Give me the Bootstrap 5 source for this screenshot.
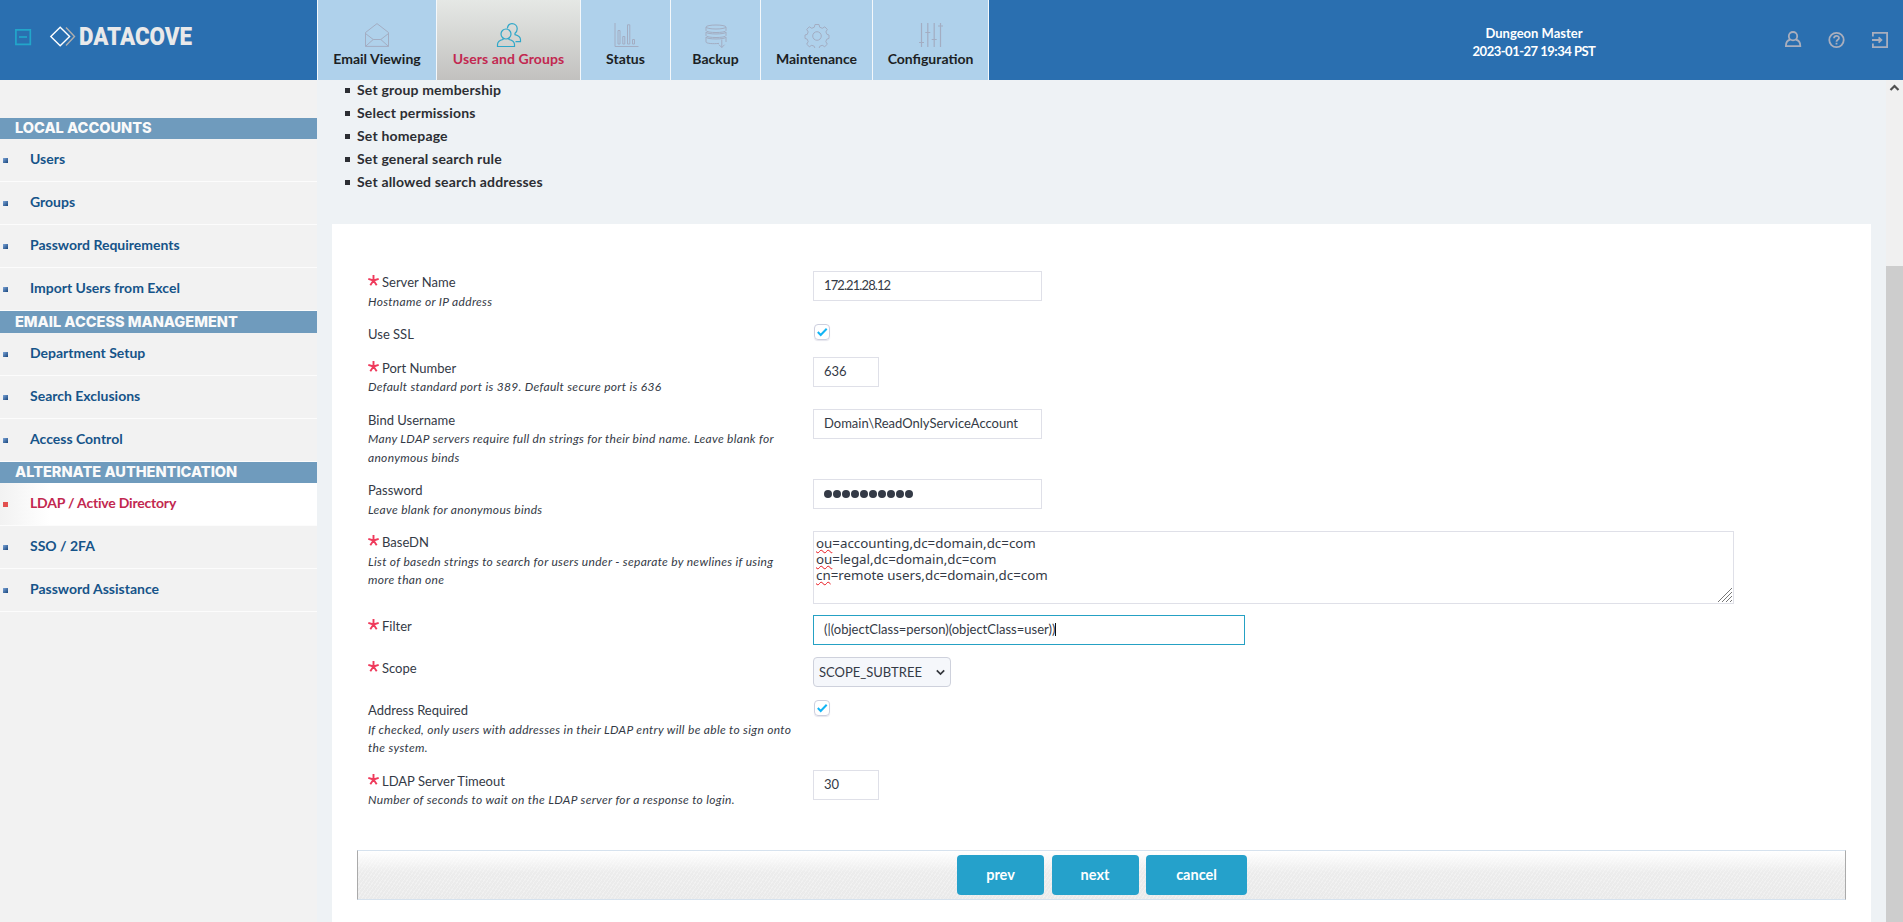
<!DOCTYPE html>
<html lang="en">
<head>
    <meta charset="UTF-8">
    <meta name="viewport" content="width=device-width, initial-scale=1.0">
    <title>DataCove - LDAP / Active Directory</title>
    <link href="https://cdn.jsdelivr.net/npm/bootstrap@5.3.0/dist/css/bootstrap.min.css" rel="stylesheet">
    <script src="https://cdn.jsdelivr.net/npm/bootstrap@5.3.0/dist/js/bootstrap.bundle.min.js"></script>
    <style>
        body { font-family: Lato, "Liberation Sans", sans-serif; font-size: 13px; line-height: 18.5px; color: #343a46; background: #eef2f5; }
        svg { display: block; fill: none; }

        /* top bar */
        .topbar { height: 80px; background: #2a6fb0; }
        .brand-area { width: 317px; padding-left: 15px; }
        .collapse-icon { margin-top: 29px; }
        .brand-logo { margin: 20px 0 0 17px; }
        .main-tabs { height: 80px; border-right: 1px solid #f4f8fb; }
        .main-tabs .nav-link { height: 80px; padding: 22px 0 0; border-left: 1px solid #f4f8fb; border-radius: 0; background: #afd1eb; color: #1c1f24; font-size: 14px; font-weight: 700; line-height: 20px; text-align: center; }
        .main-tabs .nav-link svg { margin: 0 auto 1px; stroke: #a3adc2; }
        .main-tabs .nav-link.active { background: linear-gradient(#e5e8e5, #c2c1bf); color: #c22850; letter-spacing: .1px; }
        .main-tabs .nav-link.active svg { stroke: #2fa7c9; }
        .tab-119 { width: 119px; }
        .tab-144 { width: 144px; }
        .tab-90 { width: 90px; }
        .tab-112 { width: 112px; }
        .tab-116 { width: 116px; }
        .session { width: 140px; margin-right: 181px; padding-top: 24px; color: #fff; font-weight: 700; line-height: 18px; }
        .session-date { letter-spacing: -.5px; }
        .top-icons { width: 118px; padding: 31px 15px 0 0; stroke: #a9aebd; stroke-width: 1.8; }

        /* sidebar */
        .app-body { height: 842px; }
        .sidebar { width: 317px; padding-top: 38px; background: #f2f2f2; }
        .side-title { height: 21px; padding-left: 15px; background: #6f9bbd; color: #fafafa; font: 800 14.55px/20px Inter, sans-serif; }
        .side-title.tall { height: 22px; line-height: 22px; }
        .sidebar .list-group-item { height: 43px; padding: 0 0 3px 3px; border: 0; border-bottom: 1px solid #fcfcfc; border-radius: 0; background: transparent; color: #165489; font-size: 14px; font-weight: 700; line-height: 38px; }
        .sidebar .list-group-item::before { content: ""; width: 5px; height: 5px; margin: 3px 22px 0 0; background: linear-gradient(135deg, #7da5d8, #17457c); }
        .sidebar .list-group-item.active { margin-top: 0; background: linear-gradient(90deg, #f2f2f2, #fff 50px); color: #c22850; letter-spacing: -.2px; }
        .sidebar .list-group-item.active::before { background: #e2504f; }

        /* main column */
        .steps { height: 144px; padding: 0 0 0 28px; font-size: 14px; font-weight: 700; line-height: 23px; color: #2c2e33; }
        .steps li { letter-spacing: .18px; }
        .steps li:first-child { margin-top: -2px; }
        .steps li::before { content: ""; display: inline-block; width: 5px; height: 5px; margin-right: 7px; vertical-align: 2px; background: #2c2e33; }
        .panel { margin: 0 15px; padding: 47px 25px 0; background: #fff; }
        .form-line > .label-col { width: 456px; padding: 2px 15px 13px 11px; }
        .hint { position: relative; top: 1px; font-size: 12px; font-style: italic; letter-spacing: .31px; }
        .star { width: 11px; height: 11px; margin: 2px 3px 0 0; stroke: #ef3a5b; stroke-width: 1.9; }
        .panel .form-control { height: 30px; margin-bottom: 11px; padding: 0 10px; border: 1px solid #dfe0e8; border-radius: 0; font-size: 13px; line-height: 27px; color: #343a46; box-shadow: none; }
        .w-wide { width: 229px; }
        .w-short { width: 66px; }
        .panel .w-filter { width: 432px; margin-bottom: 12px; border-color: #25a1c4; }
        .caret { display: inline-block; width: 1px; height: 13px; vertical-align: -2px; background: #111; }
        .panel .ip { letter-spacing: -.9px; }
        .dots { height: 28px; }
        .dots i { width: 8px; height: 8px; margin-right: 1px; border-radius: 50%; background: #343a46; }
        .panel .basedn { position: relative; width: 921px; height: 73px; padding: 3px 2px; font: 13.33px/16px "Noto Sans", sans-serif; }
        .typo { text-decoration: underline wavy #e8171f 1px; text-underline-offset: 1px; text-decoration-skip-ink: none; }
        .grip { position: absolute; right: 1px; bottom: 1px; stroke: #777; }
        .panel .form-select { width: 138px; height: 30px; margin-bottom: 12px; padding: 0 5px; border: 1px solid #ced1dc; border-radius: 4px; background: #f5f7fb; color: #343a46; font-size: 13px; line-height: 28px; }
        .check-box { width: 16px; height: 16px; margin: 1px 0 0 1px; border: 1px solid #cdcfde; border-radius: 4px; box-shadow: 0 1px 1px #e6e6ee; stroke: #12b4f5; stroke-width: 2; }
        .action-bar { height: 50px; margin-top: 28px; border: 1px solid #d6e2ee; border-left-color: #aaa; border-right-color: #aaa; background: repeating-linear-gradient(-55deg, rgba(255,255,255,.3) 0 1px, transparent 1px 3px), linear-gradient(#fff, #ececec 45%, #eaeaea); padding: 4px 0 0 599px; }
        .action-bar .btn { height: 40px; padding: 0; border: 0; border-radius: 4px; background: #25a1cb; color: #fff; font-size: 14.5px; font-weight: 700; line-height: 38px; }
        .btn-step { width: 87px; margin-right: 7.5px; }
        .btn-cancel { width: 101px; }

        .scroll-track { width: 17px; background: #f0f0f0; }
        .scroll-thumb { margin-top: 170px; background: #cdcdcd; }
    </style>
</head>

<body class="overflow-hidden">
    <header class="topbar d-flex">
        <div class="brand-area d-flex align-items-start">
            <svg class="collapse-icon" width="17" height="17" stroke="#22a6ca"><path d="M.9 .9h14.4v14.4H.9z" stroke-width="1.7"/><path d="M4 8h8" stroke-width="1.7"/></svg>
            <svg class="brand-logo overflow-visible" width="220" height="44">
                <path d="M17 7.500 25.500 16.500 17 25.500" stroke="#b1aeac" stroke-width="1.4"/>
                <path d="M1.800 16.500 11.200 7.300 20.600 16.500 11.200 25.800z" stroke="#fff" stroke-width="1.4"/>
                <text x="30" y="25.300" textLength="113" lengthAdjust="spacingAndGlyphs" font-family="Roboto, sans-serif" font-weight="900" font-size="26.500" fill="#e9e9ea">DATACOVE</text>
            </svg>
        </div>
        <nav class="main-tabs nav flex-nowrap">
            <a class="nav-link tab-119" href="#">
                <svg width="26" height="26"><path d="M1.5 10.5 13 1.6 24.5 10.5V24.4h-23zM1.5 11.5 9.2 17.5h7.6l7.7-6M1.5 24.4l7.7-6.9M24.5 24.4l-7.7-6.9"/></svg>
                Email Viewing
            </a>
            <a class="nav-link tab-144 active" href="#">
                <svg width="26" height="26" stroke-width="1.2"><circle cx="10" cy="12" r="5"/><path d="M7 16.3v1.2c-3.6.8-5.5 2.3-5.5 5v2h17v-2c0-2.700-1.900-4.200-5.500-5v-1.200M11.300 6.500c.5-3 2.200-4.900 4.700-4.900 3 0 5.200 2.300 5.200 5.200 0 2-.8 3.500-2.200 4.500v1.400c3.500.9 5.500 2.400 5.500 5v2h-5"/></svg>
                Users and Groups
            </a>
            <a class="nav-link tab-90" href="#">
                <svg width="26" height="26"><path d="M2 1v23.500h23.500M5 8.500h2v13.500h-2zM9.800 14.500h2v7.500h-2zM14.500 2.800h2.300v19.200h-2.300zM19.500 17.500h2v4.500h-2z"/></svg>
                Status
            </a>
            <a class="nav-link tab-90" href="#">
                <svg width="26" height="26"><ellipse cx="13" cy="5" rx="10" ry="2"/><path d="M3 5v3.500c0 2.700 20 2.700 20 0V5M3 10v3.500c0 2.700 20 2.700 20 0V10c0 2.600-20 2.600-20 0M3 15v5c0 1.500 7 2 13 1.400M3 15c0 2.600 20 2.600 20 0v5M18.800 17.500v8M16 22.700l2.800 2.800 2.800-2.800"/></svg>
                Backup
            </a>
            <a class="nav-link tab-112" href="#">
                <svg width="26" height="26"><circle cx="13" cy="14" r="4.300"/><path d="M11 2.500h4l.7 2.700 2.600 1.100 2.500-1.500 2.500 2.600-1.400 2.500 1.100 2.500 2 .6v3.400l-2.200.8-1 2.400 1.500 2.600-2.600 2.500-2.500-1.400-2.500 1-.7 2.500h-4l-.7-2.500-2.500-1-2.500 1.400-2.600-2.500 1.500-2.600-1-2.400-2.200-.8v-3.400l2.200-.6 1-2.500-1.500-2.500 2.600-2.600 2.500 1.500 2.500-1.100z"/></svg>
                Maintenance
            </a>
            <a class="nav-link tab-116" href="#">
                <svg width="26" height="26"><path d="M3.500 1v24M9.800 1v24M16.200 1v24M22.500 1v24M1 20.500h5M7.300 10.500h5M13.700 17.500h5M20 4h5" stroke-width="1.200"/></svg>
                Configuration
            </a>
        </nav>
        <div class="session ms-auto text-center">
            Dungeon Master<br><span class="session-date">2023-01-27 19:34 PST</span>
        </div>
        <div class="top-icons d-flex justify-content-between">
            <svg width="17" height="18"><circle cx="8" cy="5.200" r="4.200"/><path d="M5.300 8.500C2.200 9.200 .9 11.500 .9 15.100h14.400c0-3.600-1.500-5.900-4.600-6.600"/></svg>
            <svg width="17" height="18"><circle cx="8.500" cy="9" r="7.200"/><path d="M6 7.300c0-3.300 5-3.300 5-.2 0 1.700-2.500 1.700-2.500 3.600M8.500 11.800v1.800"/></svg>
            <svg width="17" height="18"><path d="M1.900 5.500V1.900h14.200v14.200H1.900v-3.600M1 9h8.500M7.600 6.300 10.400 9l-2.800 2.700"/></svg>
        </div>
    </header>

    <div class="app-body d-flex">
        <aside class="sidebar flex-shrink-0">
            <div class="side-title">LOCAL ACCOUNTS</div>
            <div class="list-group">
                <a class="list-group-item d-flex align-items-center" href="#">Users</a>
                <a class="list-group-item d-flex align-items-center" href="#">Groups</a>
                <a class="list-group-item d-flex align-items-center" href="#">Password Requirements</a>
                <a class="list-group-item d-flex align-items-center" href="#">Import Users from Excel</a>
            </div>
            <div class="side-title tall">EMAIL ACCESS MANAGEMENT</div>
            <div class="list-group">
                <a class="list-group-item d-flex align-items-center" href="#">Department Setup</a>
                <a class="list-group-item d-flex align-items-center" href="#">Search Exclusions</a>
                <a class="list-group-item d-flex align-items-center" href="#">Access Control</a>
            </div>
            <div class="side-title">ALTERNATE AUTHENTICATION</div>
            <div class="list-group">
                <a class="list-group-item d-flex align-items-center active" href="#">LDAP / Active Directory</a>
                <a class="list-group-item d-flex align-items-center" href="#">SSO / 2FA</a>
                <a class="list-group-item d-flex align-items-center" href="#">Password Assistance</a>
            </div>
        </aside>

        <main class="flex-grow-1 d-flex flex-column">
            <ul class="steps list-unstyled mb-0">
                <li>Set group membership</li>
                <li>Select permissions</li>
                <li>Set homepage</li>
                <li>Set general search rule</li>
                <li>Set allowed search addresses</li>
            </ul>

            <div class="panel flex-grow-1">
                <div class="form-line d-flex">
                    <div class="label-col">
                        <div class="d-flex"><svg class="star" viewBox="0 0 11 11"><path d="M5.500 5.500V0M5.500 5.500.3 3.900M5.500 5.500l5.200-1.600M5.500 5.500 2.300 10.200M5.500 5.500l3.200 4.700"/></svg>Server Name</div>
                        <div class="hint">Hostname or IP address</div>
                    </div>
                    <div class="form-control w-wide ip">172.21.28.12</div>
                </div>
                <div class="form-line d-flex">
                    <div class="label-col">Use SSL</div>
                    <div class="check-box"><svg width="14" height="14"><path d="M2.800 7 5.700 10l6-6.300"/></svg></div>
                </div>
                <div class="form-line d-flex">
                    <div class="label-col">
                        <div class="d-flex"><svg class="star" viewBox="0 0 11 11"><path d="M5.500 5.500V0M5.500 5.500.3 3.900M5.500 5.500l5.200-1.600M5.500 5.500 2.300 10.200M5.500 5.500l3.200 4.700"/></svg>Port Number</div>
                        <div class="hint">Default standard port is 389. Default secure port is 636</div>
                    </div>
                    <div class="form-control w-short">636</div>
                </div>
                <div class="form-line d-flex">
                    <div class="label-col">
                        <div>Bind Username</div>
                        <div class="hint">Many LDAP servers require full dn strings for their bind name. Leave blank for<br>anonymous binds</div>
                    </div>
                    <div class="form-control w-wide">Domain\ReadOnlyServiceAccount</div>
                </div>
                <div class="form-line d-flex">
                    <div class="label-col">
                        <div>Password</div>
                        <div class="hint">Leave blank for anonymous binds</div>
                    </div>
                    <div class="form-control w-wide">
                        <div class="dots d-flex align-items-center"><i></i><i></i><i></i><i></i><i></i><i></i><i></i><i></i><i></i><i></i></div>
                    </div>
                </div>
                <div class="form-line d-flex">
                    <div class="label-col">
                        <div class="d-flex"><svg class="star" viewBox="0 0 11 11"><path d="M5.500 5.500V0M5.500 5.500.3 3.900M5.500 5.500l5.200-1.600M5.500 5.500 2.300 10.200M5.500 5.500l3.200 4.700"/></svg>BaseDN</div>
                        <div class="hint">List of basedn strings to search for users under - separate by newlines if using<br>more than one</div>
                    </div>
                    <div class="form-control basedn">
                        <span class="typo">ou</span>=accounting,dc=domain,dc=com<br>
                        <span class="typo">ou</span>=legal,dc=domain,dc=com<br>
                        <span class="typo">cn</span>=remote users,dc=domain,dc=com
                        <svg class="grip" width="15" height="15"><path d="M1 15 15 1M5 15 15 5M9 15l6-6M13 15l2-2"/></svg>
                    </div>
                </div>
                <div class="form-line d-flex">
                    <div class="label-col">
                        <div class="d-flex"><svg class="star" viewBox="0 0 11 11"><path d="M5.500 5.500V0M5.500 5.500.3 3.900M5.500 5.500l5.200-1.600M5.500 5.500 2.300 10.200M5.500 5.500l3.200 4.700"/></svg>Filter</div>
                    </div>
                    <div class="form-control w-filter">(|(objectClass=person)(objectClass=user))<span class="caret"></span></div>
                </div>
                <div class="form-line d-flex">
                    <div class="label-col">
                        <div class="d-flex"><svg class="star" viewBox="0 0 11 11"><path d="M5.500 5.500V0M5.500 5.500.3 3.900M5.500 5.500l5.200-1.600M5.500 5.500 2.300 10.200M5.500 5.500l3.200 4.700"/></svg>Scope</div>
                    </div>
                    <div class="form-select d-flex align-items-center justify-content-between">SCOPE_SUBTREE
                        <svg width="9" height="7" stroke="#33363c" stroke-width="1.700"><path d="M.8 1.300 4.500 5l3.700-3.700"/></svg>
                    </div>
                </div>
                <div class="form-line d-flex">
                    <div class="label-col">
                        <div>Address Required</div>
                        <div class="hint">If checked, only users with addresses in their LDAP entry will be able to sign onto<br>the system.</div>
                    </div>
                    <div class="check-box"><svg width="14" height="14"><path d="M2.800 7 5.700 10l6-6.300"/></svg></div>
                </div>
                <div class="form-line d-flex">
                    <div class="label-col">
                        <div class="d-flex"><svg class="star" viewBox="0 0 11 11"><path d="M5.500 5.500V0M5.500 5.500.3 3.900M5.500 5.500l5.200-1.600M5.500 5.500 2.300 10.200M5.500 5.500l3.200 4.700"/></svg>LDAP Server Timeout</div>
                        <div class="hint">Number of seconds to wait on the LDAP server for a response to login.</div>
                    </div>
                    <div class="form-control w-short">30</div>
                </div>

                <div class="action-bar d-flex">
                    <button class="btn btn-step">prev</button>
                    <button class="btn btn-step">next</button>
                    <button class="btn btn-cancel">cancel</button>
                </div>
            </div>
        </main>

        <div class="scroll-track d-flex flex-column flex-shrink-0">
            <svg width="17" height="16" stroke="#505050" stroke-width="2.200"><path d="M4.500 10 8.500 6l4 4"/></svg>
            <div class="scroll-thumb flex-grow-1"></div>
        </div>
    </div>
</body>
</html>
